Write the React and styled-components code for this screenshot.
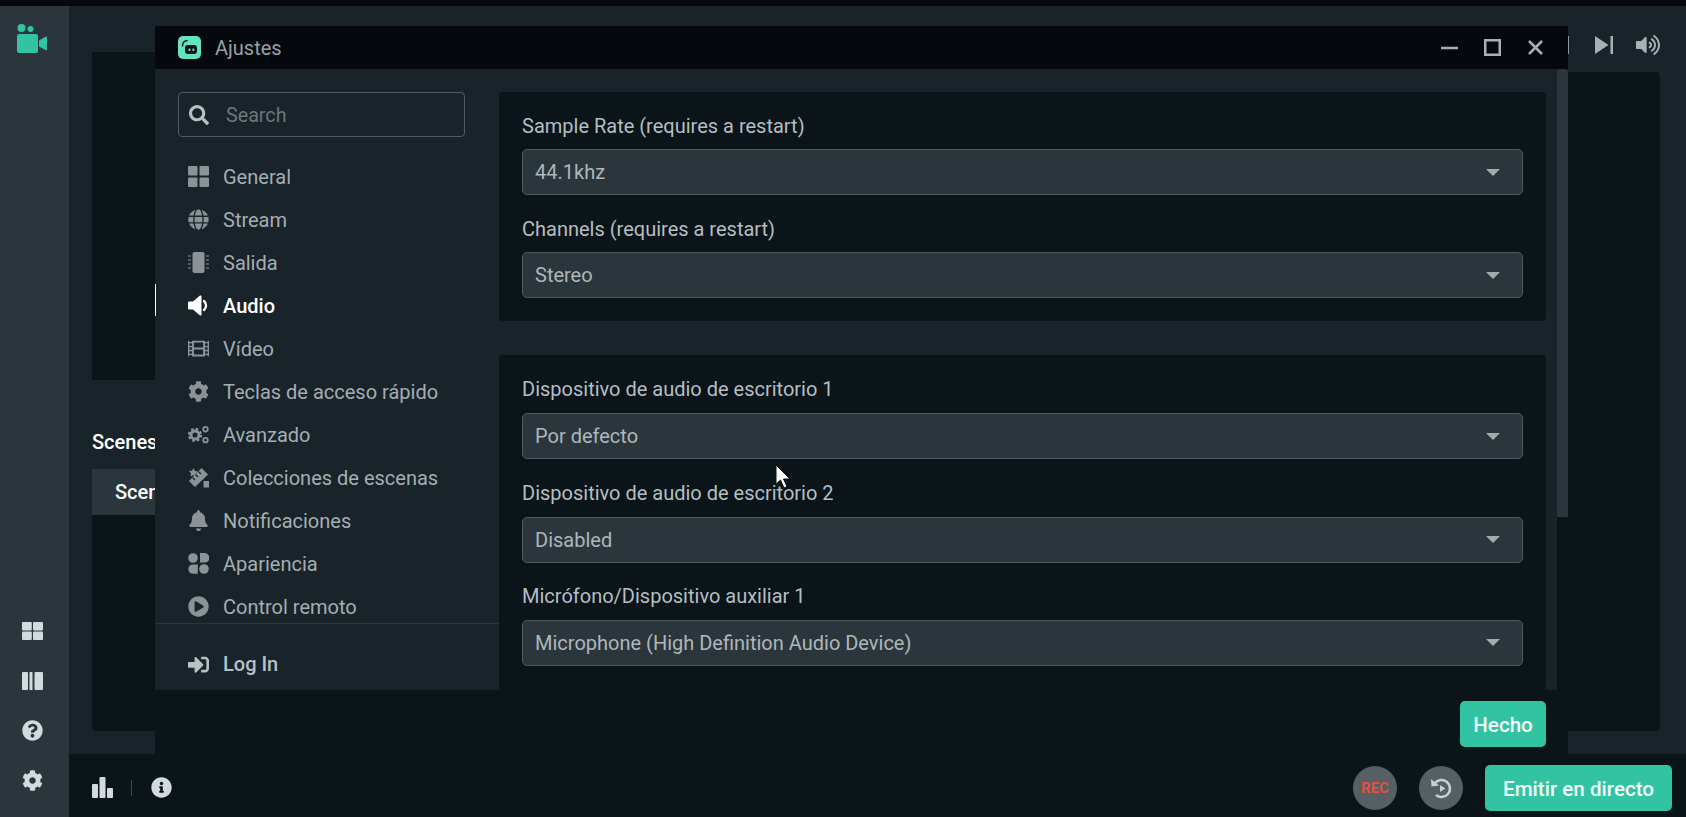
import React from 'react';
import styled, { createGlobalStyle } from 'styled-components';
import {
  FaGlobe, FaFilm, FaCog, FaBell, FaPlayCircle, FaSignInAlt, FaSearch,
  FaVolumeUp, FaQuestionCircle, FaInfoCircle,
} from 'react-icons/fa';

const Global = createGlobalStyle`
  html, body { margin: 0; padding: 0; background: #05090d; overflow: hidden; }
  * { box-sizing: border-box; }
  body { font-family: Roboto, "Liberation Sans", sans-serif; }
`;

const Page = styled.div`
  position: relative;
  width: 1686px;
  height: 817px;
  padding-top: 6px;
  display: grid;
  grid-template-columns: 69px 1fr;
  grid-template-rows: 748px 63px;
  overflow: hidden;
`;

const Rail = styled.aside`
  grid-row: 1 / span 2;
  background: #2b363c;
  display: flex;
  flex-direction: column;
  align-items: center;
  padding: 18px 5px 26px 0;
`;
const RailSpacer = styled.div`flex: 1;`;
const RailButton = styled.div`
  width: 21px;
  height: 21px;
  color: #d3dade;
  display: flex;
  align-items: center;
  justify-content: center;
  margin-top: ${p => p.$gap || 0}px;
  font-size: 21px;
`;

const Main = styled.main`
  background: #18232a;
  display: grid;
  grid-template-columns: 1278px 1fr;
  padding: 0 26px 23px 23px;
  column-gap: 40px;
`;
const LeftColumn = styled.div`
  display: flex;
  flex-direction: column;
  padding-top: 46px;
`;
const DisplayPanel = styled.div`
  height: 328px;
  background: #0a1419;
`;
const SectionTitle = styled.div`
  margin-top: 50px;
  height: 24px;
  line-height: 24px;
  color: #fff;
  font-size: 20px;
  font-weight: 500;
`;
const ScenePanel = styled.div`
  margin-top: 15px;
  flex: 1;
  background: #0a1419;
  border-radius: 0 0 4px 4px;
`;
const SceneHeader = styled.div`
  height: 46px;
  line-height: 46px;
  padding-left: 23px;
  background: #2b363c;
  color: #fff;
  font-size: 20px;
  font-weight: 500;
`;
const RightColumn = styled.div`
  display: flex;
  flex-direction: column;
`;
const PlayerBar = styled.div`
  height: 66px;
  display: flex;
  align-items: center;
  justify-content: flex-end;
  gap: 23px;
  color: #a9b0b4;
  padding-top: 11px;
`;
const PlayerDivider = styled.div`
  width: 1px;
  height: 18px;
  background: #8f979b;
  margin-right: 3px;
`;
const MixerPanel = styled.div`
  flex: 1;
  background: #0a1419;
  border-radius: 4px;
`;

const Footer = styled.footer`
  background: #0a1419;
  display: flex;
  align-items: center;
  padding: 4px 14px 0 23px;
`;
const StatsGroup = styled.div`
  display: flex;
  align-items: center;
  color: #d3dade;
  flex: 1;
`;
const FooterDivider = styled.div`
  width: 1px;
  height: 16px;
  background: #3b464c;
  margin: 0 19px 0 18px;
`;
const RoundButton = styled.div`
  width: 44px;
  height: 44px;
  border-radius: 50%;
  background: #565f64;
  display: flex;
  align-items: center;
  justify-content: center;
  margin-right: 22px;
  color: #c6d0d4;
`;
const RecText = styled.span`
  color: #e2503f;
  font-size: 15px;
  font-weight: 700;
`;
const PrimaryButton = styled.button`
  border: 0;
  border-radius: 5px;
  background: #31c3a2;
  color: #f4fffb;
  font-family: inherit;
  font-weight: 500;
  font-size: 20.6px;
  height: 46px;
  padding: 2px 0 0;
  width: ${p => p.$width}px;
`;

const Modal = styled.section`
  position: absolute;
  left: 155px;
  top: 26px;
  width: 1413px;
  height: 728px;
  display: grid;
  grid-template-rows: 43px 621px 64px;
  background: #0a1419;
`;
const TitleBar = styled.header`
  background: #05090d;
  display: flex;
  align-items: center;
  padding: 0 24px 0 23px;
`;
const AppBadge = styled.div`
  width: 23px;
  height: 23px;
  border-radius: 5px;
  background: #62e3c3;
  display: flex;
  align-items: center;
  justify-content: center;
`;
const TitleText = styled.span`
  margin-left: 14px;
  color: #98a1a5;
  font-size: 20px;
  flex: 1;
`;
const WindowControls = styled.div`
  display: flex;
  gap: 26px;
  align-items: center;
  color: #a9b0b4;
`;
const ModalBody = styled.div`
  display: grid;
  grid-template-columns: 344px 1fr 11px;
  min-height: 0;
`;
const Nav = styled.nav`
  background: #18232a;
  display: flex;
  flex-direction: column;
  min-height: 0;
  padding-top: 23px;
`;
const SearchBox = styled.div`
  margin: 0 34px 0 23px;
  height: 45px;
  border: 1px solid #4f5b62;
  border-radius: 4px;
  display: flex;
  align-items: center;
  padding-left: 10px;
  color: #b9c0c4;
  flex: none;
`;
const SearchPlaceholder = styled.span`
  margin-left: 17px;
  padding-top: 2px;
  color: #6c767c;
  font-size: 19.7px;
`;
const NavList = styled.div`
  margin-top: 18px;
  height: 468px;
  overflow: hidden;
  flex: none;
`;
const NavRow = styled.div`
  height: 43px;
  display: flex;
  align-items: center;
  padding-left: 33px;
  gap: 14px;
  font-size: 20px;
  color: ${p => (p.$active ? '#ffffff' : '#a6adb1')};
  font-weight: ${p => (p.$active ? 500 : 400)};
  position: relative;
`;
const NavIcon = styled.span`
  width: 21px;
  height: 21px;
  display: flex;
  align-items: center;
  justify-content: center;
  color: ${p => (p.$active ? '#ffffff' : '#8b9398')};
  font-size: 21px;
  flex: none;
`;
const ActiveMark = styled.i`
  position: absolute;
  left: 0;
  top: 0;
  width: 1px;
  height: 32px;
  background: #fff;
`;
const LoginArea = styled.div`
  border-top: 1px solid #2b363c;
  flex: 1;
  padding-top: 17px;
`;
const LoginRow = styled.div`
  height: 46px;
  display: flex;
  align-items: center;
  padding-left: 33px;
  gap: 14px;
  font-size: 20px;
  font-weight: 500;
  color: #b9c0c4;
`;
const Content = styled.div`
  background: #18232a;
  padding: 23px 11px 0 0;
  overflow: hidden;
  display: flex;
  flex-direction: column;
  gap: 34px;
`;
const FieldLabel = styled.div`
  height: 24px;
  line-height: 24px;
  margin-bottom: 12px;
  font-size: 20px;
  color: #b6bec2;
`;
const Card = styled.div`
  background: #0a1419;
  border-radius: 4px;
  padding: 22px 23px;
  display: flex;
  flex-direction: column;
  gap: 21.3px;
  flex: none;
  &:first-child {
    padding-bottom: 23px;
    gap: 22.3px;
    ${FieldLabel} { margin-bottom: 11px; }
  }
  &:last-child { flex: 1 0 auto; }
`;
const Select = styled.div`
  height: 46px;
  border: 1px solid #4f5b62;
  border-radius: 5px;
  background: #2b363c;
  display: flex;
  align-items: center;
  justify-content: space-between;
  padding: 0 22px 0 12px;
  font-size: 20px;
  color: #aeb6ba;
`;
const Caret = styled.i`
  width: 0;
  height: 0;
  border-left: 7px solid transparent;
  border-right: 7px solid transparent;
  border-top: 7px solid #a4abaf;
`;
const ScrollTrack = styled.div`
  background: #0a1419;
`;
const ScrollThumb = styled.div`
  height: 448px;
  background: #2b363c;
  border-radius: 3px 3px 0 0;
`;
const ModalFooter = styled.div`
  display: flex;
  justify-content: flex-end;
  padding: 11px 22px 0 0;
`;
const CursorMark = styled.svg`
  position: absolute;
  left: 775px;
  top: 464px;
`;

const Squares = () => (
  <svg width="21" height="21" viewBox="0 0 21 21" fill="currentColor">
    <rect x="0" y="0" width="9.5" height="9.5" rx="1" /><rect x="11.5" y="0" width="9.5" height="9.5" rx="1" />
    <rect x="0" y="11.5" width="9.5" height="9.5" rx="1" /><rect x="11.5" y="11.5" width="9.5" height="9.5" rx="1" />
  </svg>
);
const Panes = () => (
  <svg width="21" height="18" viewBox="0 0 21 18" fill="currentColor">
    <rect x="0" y="0" width="9.800" height="8.500" rx="1" /><rect x="11" y="0" width="10" height="8.500" rx="1" />
    <rect x="0" y="9.500" width="9.800" height="8.500" rx="1" /><rect x="11" y="9.500" width="10" height="8.500" rx="1" />
  </svg>
);
const Columns = () => (
  <svg width="21" height="18" viewBox="0 0 21 18" fill="currentColor">
    <rect x="0" y="0" width="6" height="18" rx="1" /><rect x="7.500" y="0" width="3" height="18" />
    <rect x="12.500" y="0" width="8.500" height="18" rx="1" />
  </svg>
);
const Blobs = () => (
  <svg width="21" height="21" viewBox="0 0 21 21" fill="currentColor">
    <circle cx="5" cy="5" r="4.8" />
    <path d="M12 0h4.500a4.800 4.800 0 0 1 0 9.600H12z" />
    <path d="M9.800 11.400v9.400H5a4.700 4.700 0 0 1 0-9.400z" />
    <circle cx="16" cy="16" r="4.800" />
  </svg>
);
const Chip = () => (
  <svg width="21" height="21" viewBox="0 0 21 21" fill="currentColor">
    <rect x="4.500" y="0" width="12" height="21" rx="2" />
    <path d="M0 4h3M0 8h3M0 12h3M0 16h3M18 4h3M18 8h3M18 12h3M18 16h3" stroke="currentColor" strokeWidth="1.200" />
  </svg>
);
const Speaker = () => (
  <svg width="21" height="21" viewBox="0 0 21 21" fill="currentColor">
    <path d="M0 7.500 Q0 6.500 1 6.500 H5 L12 .6 Q13.500 0 13.500 1.500 V19.500 Q13.500 21 12 20.400 L5 14.500 H1 Q0 14.500 0 13.500z" />
    <path d="M16 6 A6 6 0 0 1 16 15" stroke="currentColor" strokeWidth="2.400" fill="none" strokeLinecap="round" />
  </svg>
);
const Gears = () => (
  <svg width="24" height="21" viewBox="0 0 24 21" fill="none" stroke="currentColor">
    <circle cx="8" cy="11" r="4.600" strokeWidth="3.400" />
    <circle cx="8" cy="11" r="7" strokeWidth="2.400" strokeDasharray="3 2.500" />
    <circle cx="20" cy="4.500" r="2.600" strokeWidth="2" />
    <circle cx="20" cy="17" r="2.600" strokeWidth="2" />
  </svg>
);
const Drafting = () => (
  <svg width="21" height="21" viewBox="0 0 21 21" fill="currentColor">
    <path d="M1 3.500 L4 4 L5.500 1 L7 4 L10 4.500 L7.500 6.500 L8 9.500 L5.500 8 L2.500 9.500 L3 6.500z" />
    <path d="M1 14 L13.500 1 L20 7.500 L7 20z" />
    <path d="M15.500 14 L21 14 L21 20.500 L15.500 20.500z" />
    <path d="M4.500 10.500 L7 13 M7.500 7.500 L10 10 M10.500 4.500 L13 7" stroke="#18232a" strokeWidth="1.200" />
  </svg>
);
const SkipForward = () => (
  <svg width="18" height="18" viewBox="0 0 18 18" fill="currentColor">
    <path d="M0 0 L13.500 9 L0 18z" /><rect x="15.500" y="0" width="2.500" height="18" />
  </svg>
);
const Bars = () => (
  <svg width="21" height="21" viewBox="0 0 21 21" fill="currentColor">
    <rect x="0" y="7" width="6" height="14" rx="1" /><rect x="7.500" y="0" width="6" height="21" rx="1" />
    <rect x="15" y="11" width="6" height="10" rx="1" />
  </svg>
);
const CameraLogo = () => (
  <svg width="30" height="30" viewBox="0 0 30 30" fill="#32c3a2">
    <circle cx="4.500" cy="4" r="4" /><circle cx="13.500" cy="5" r="3" />
    <rect x="0" y="10" width="21" height="19" rx="2" />
    <path d="M22 16.500 L29 12.500 a0.800 0.800 0 0 1 1 .7 V25.500 a0.800 0.800 0 0 1 -1 .7 L22 22.500z" />
  </svg>
);
const Bot = () => (
  <svg width="17" height="17" viewBox="0 0 17 17">
    <path d="M1.500 7 C1.500 3.500 3.500 2 6 1.500" stroke="#0a1419" strokeWidth="1.500" fill="none" strokeLinecap="round" />
    <rect x="4" y="6" width="12" height="9" rx="3" fill="#0a1419" />
    <rect x="7.500" y="9.500" width="1.800" height="2.500" fill="#62e3c3" /><rect x="11.500" y="9.500" width="1.800" height="2.500" fill="#62e3c3" />
  </svg>
);
const Replay = () => (
  <svg width="24" height="24" viewBox="0 0 24 24" fill="none" stroke="currentColor" strokeWidth="2.600">
    <path d="M6 7 A8.500 8.500 0 1 1 7 19" />
    <path d="M2 3 L2.500 10.500 L10 9.500z" fill="currentColor" stroke="none" />
    <path d="M11 9 L16.500 12.500 L11 16z" fill="currentColor" stroke="none" />
  </svg>
);

const navItems = [
  ['General', <Squares />],
  ['Stream', <FaGlobe />],
  ['Salida', <Chip />],
  ['Audio', <Speaker />, true],
  ['Vídeo', <FaFilm />],
  ['Teclas de acceso rápido', <FaCog />],
  ['Avanzado', <Gears />],
  ['Colecciones de escenas', <Drafting />],
  ['Notificaciones', <FaBell />],
  ['Apariencia', <Blobs />],
  ['Control remoto', <FaPlayCircle />],
];
const sections = [
  [['Sample Rate (requires a restart)', '44.1khz'], ['Channels (requires a restart)', 'Stereo']],
  [
    ['Dispositivo de audio de escritorio 1', 'Por defecto'],
    ['Dispositivo de audio de escritorio 2', 'Disabled'],
    ['Micrófono/Dispositivo auxiliar 1', 'Microphone (High Definition Audio Device)'],
  ],
];

export default function App() {
  return (
    <Page>
      <Global />
      <Rail>
        <CameraLogo />
        <RailSpacer />
        <RailButton><Panes /></RailButton>
        <RailButton $gap={29}><Columns /></RailButton>
        <RailButton $gap={29}><FaQuestionCircle /></RailButton>
        <RailButton $gap={29}><FaCog /></RailButton>
      </Rail>
      <Main>
        <LeftColumn>
          <DisplayPanel />
          <SectionTitle>Scenes</SectionTitle>
          <ScenePanel><SceneHeader>Scenes</SceneHeader></ScenePanel>
        </LeftColumn>
        <RightColumn>
          <PlayerBar>
            <PlayerDivider />
            <SkipForward />
            <FaVolumeUp size={24} />
          </PlayerBar>
          <MixerPanel />
        </RightColumn>
      </Main>
      <Footer>
        <StatsGroup>
          <Bars />
          <FooterDivider />
          <FaInfoCircle size={21} />
        </StatsGroup>
        <RoundButton><RecText>REC</RecText></RoundButton>
        <RoundButton><Replay /></RoundButton>
        <PrimaryButton $width={187}>Emitir en directo</PrimaryButton>
      </Footer>

      <Modal>
        <TitleBar>
          <AppBadge><Bot /></AppBadge>
          <TitleText>Ajustes</TitleText>
          <WindowControls>
            <svg width="17" height="17" viewBox="0 0 17 17" stroke="currentColor" strokeWidth="2.500"><path d="M0 9h17" /></svg>
            <svg width="17" height="17" viewBox="0 0 17 17" fill="none" stroke="currentColor" strokeWidth="2.500"><rect x="1.250" y="1.250" width="14.500" height="14.500" /></svg>
            <svg width="17" height="17" viewBox="0 0 17 17" stroke="currentColor" strokeWidth="2.500"><path d="M2 2l13 13M15 2L2 15" /></svg>
          </WindowControls>
        </TitleBar>
        <ModalBody>
          <Nav>
            <SearchBox>
              <FaSearch size={20} />
              <SearchPlaceholder>Search</SearchPlaceholder>
            </SearchBox>
            <NavList>
              {navItems.map(([label, icon, active]) => (
                <NavRow key={label} $active={active}>
                  {active && <ActiveMark />}
                  <NavIcon $active={active}>{icon}</NavIcon>
                  {label}
                </NavRow>
              ))}
            </NavList>
            <LoginArea>
              <LoginRow><NavIcon><FaSignInAlt color="#b9c0c4" /></NavIcon>Log In</LoginRow>
            </LoginArea>
          </Nav>
          <Content>
            {sections.map((fields, i) => (
              <Card key={i}>
                {fields.map(([label, value]) => (
                  <div key={label}>
                    <FieldLabel>{label}</FieldLabel>
                    <Select>{value}<Caret /></Select>
                  </div>
                ))}
              </Card>
            ))}
          </Content>
          <ScrollTrack><ScrollThumb /></ScrollTrack>
        </ModalBody>
        <ModalFooter><PrimaryButton $width={86}>Hecho</PrimaryButton></ModalFooter>
      </Modal>
      <CursorMark width="18" height="26" viewBox="0 0 18 26">
        <path d="M1 1 L1 20 L5.500 16 L9 24 L12 22.500 L8.500 15 L15 15z" fill="#fff" stroke="#111" strokeWidth="1" />
      </CursorMark>
    </Page>
  );
}
